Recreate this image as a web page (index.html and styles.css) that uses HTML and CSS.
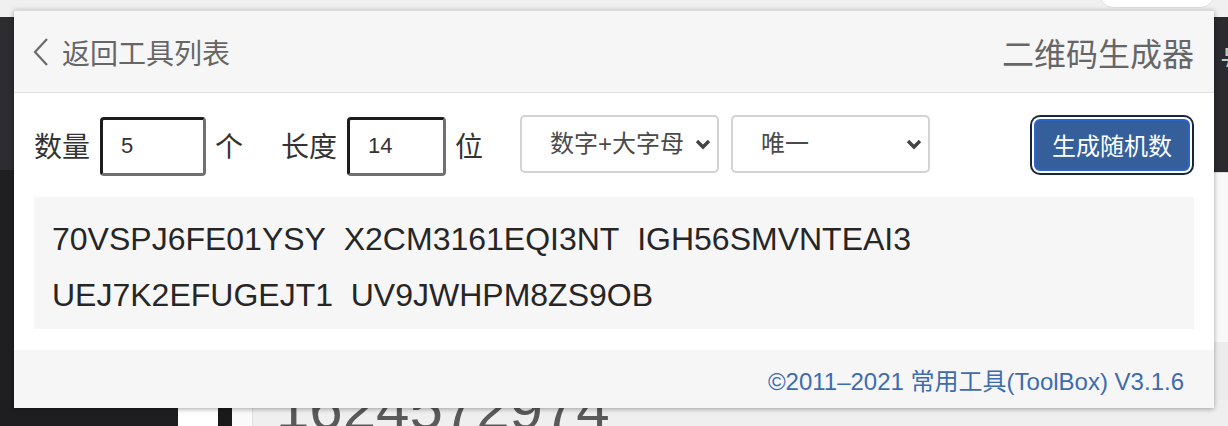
FILE: index.html
```html
<!DOCTYPE html>
<html lang="zh-CN">
<head>
  <meta charset="UTF-8">
  <meta name="viewport" content="width=device-width, initial-scale=1.0">
  <title>二维码生成器 - 生成随机数</title>
  <link rel="stylesheet" href="styles.css">
</head>
<body>
  <!-- page behind the popup -->
  <div class="bg-top"><div class="bg-pill"></div></div>
  <div class="bg-left"></div>
  <div class="bg-right-dark"><span class="bg-glyph">号</span></div>
  <div class="bg-right-light"></div>
  <div class="bg-right-gray"></div>
  <div class="bg-bottom">
    <div class="strip strip-dark"></div>
    <div class="strip strip-white"></div>
    <div class="strip strip-black"></div>
    <div class="strip strip-white2"></div>
    <div class="strip strip-gray"></div>
  </div>
  <div class="bg-number">1624572974</div>

  <!-- popup -->
  <div class="popup">
    <div class="header">
      <a class="back" href="#">
        <svg class="back-icon" width="16" height="30" viewBox="0 0 16 30"><polyline points="14,2 2,15 14,28" fill="none" stroke="#6b6b6b" stroke-width="2.2"/></svg>
        <span>返回工具列表</span>
      </a>
      <div class="title">二维码生成器</div>
    </div>

    <div class="main">
      <div class="controls">
        <span class="label">数量</span>
        <input type="text" class="num-input" value="5">
        <span class="label unit">个</span>
        <span class="label">长度</span>
        <input type="text" class="num-input" value="14">
        <span class="label">位</span>
        <div class="select-wrap first">
          <select class="select">
            <option>数字+大字母</option>
          </select>
          <svg class="chevron" width="16" height="11" viewBox="0 0 16 11"><polyline points="2,2 8,8 14,2" fill="none" stroke="#444" stroke-width="3.4"/></svg>
        </div>
        <div class="select-wrap">
          <select class="select">
            <option>唯一</option>
          </select>
          <svg class="chevron" width="16" height="11" viewBox="0 0 16 11"><polyline points="2,2 8,8 14,2" fill="none" stroke="#444" stroke-width="3.4"/></svg>
        </div>
        <button class="gen-button">生成随机数</button>
      </div>

      <div class="output" id="output">
        <div>70VSPJ6FE01YSY&nbsp;&nbsp;X2CM3161EQI3NT&nbsp;&nbsp;IGH56SMVNTEAI3</div>
        <div>UEJ7K2EFUGEJT1&nbsp;&nbsp;UV9JWHPM8ZS9OB</div>
      </div>
    </div>

    <div class="footer">©2011–2021 常用工具(ToolBox) V3.1.6</div>
  </div>
</body>
</html>
```

FILE: styles.css
```css
body {
  margin: 0;
  width: 1228px;
  height: 426px;
  overflow: hidden;
  position: relative;
  background: #1f1e21;
  font-family: "Liberation Sans", "Noto Sans CJK SC", sans-serif;
}

/* background page */
.bg-top {
  position: absolute;
  left: 0;
  top: 0;
  width: 1228px;
  height: 17px;
  background: #f1f0f1;
  overflow: hidden;
}
.bg-pill {
  position: absolute;
  left: 1098px;
  top: -24px;
  width: 116px;
  height: 30px;
  border-radius: 16px;
  background: #fff;
  border: 1px solid #e0e0e0;
}
.bg-left {
  position: absolute;
  left: 0;
  top: 17px;
  width: 14px;
  height: 153px;
  background: #2d2c30;
}
.bg-right-dark {
  position: absolute;
  left: 1214px;
  top: 17px;
  width: 14px;
  height: 155px;
  background: #2b2a2e;
  overflow: hidden;
}
.bg-glyph {
  position: absolute;
  left: 6px;
  top: 20px;
  font-size: 30px;
  color: #c8c8c8;
  font-family: "Noto Sans CJK SC", sans-serif;
}
.bg-right-light {
  position: absolute;
  left: 1214px;
  top: 172px;
  width: 14px;
  height: 170px;
  background: #f8f8f8;
  box-shadow: inset 0 71px 0 -70px #dcdcdc;
}
.bg-right-gray {
  position: absolute;
  left: 1214px;
  top: 342px;
  width: 14px;
  height: 84px;
  background: #ececec;
}
.bg-bottom {
  position: absolute;
  left: 0;
  top: 400px;
  width: 1228px;
  height: 26px;
  display: flex;
}
.strip-dark { width: 178px; background: #1e1d20; }
.strip-white { width: 40px; background: #fff; }
.strip-black { width: 14px; background: #1a1a1a; }
.strip-white2 { width: 20px; background: #fafafa; }
.strip-gray { flex: 1; background: #efefef; border-left: 1px solid #dedede; }
.bg-number {
  position: absolute;
  left: 276px;
  top: 379px;
  font-size: 60px;
  line-height: 60px;
  color: #5a5a5a;
}

/* popup */
.popup {
  position: absolute;
  left: 14px;
  top: 10px;
  width: 1200px;
  height: 398px;
  background: #fff;
  box-shadow: 0 1px 5px rgba(0, 0, 0, 0.35);
  display: flex;
  flex-direction: column;
}
.header {
  box-sizing: border-box;
  height: 83px;
  background: #f7f6f7;
  border-top: 1px solid #dcdcdc;
  border-bottom: 1px solid #e0e0e0;
  display: flex;
  align-items: center;
  justify-content: space-between;
  padding: 0 20px 0 19px;
}
.back {
  display: flex;
  align-items: center;
  gap: 13px;
  color: #666;
  font-size: 28px;
  text-decoration: none;
}
.title {
  font-size: 32px;
  color: #666;
}

.main {
  padding: 21px 20px 0;
}
.controls {
  display: flex;
  align-items: center;
  height: 61px;
}
.label {
  font-size: 28px;
  color: #333;
  margin-right: 10px;
}
.unit {
  margin-right: 38px;
}
.num-input {
  box-sizing: border-box;
  width: 106px;
  height: 59px;
  margin-top: 3px;
  margin-right: 9px;
  border: 3px solid;
  border-color: #1c1c1c #707070 #707070 #1c1c1c;
  border-radius: 4px;
  padding: 0 0 0 18px;
  font-family: "Liberation Sans", sans-serif;
  font-size: 22px;
  color: #333;
  outline: none;
}
.controls .num-input:nth-of-type(2) {
  width: 99px;
}
.select-wrap {
  position: relative;
  margin-top: -2px;
}
.select-wrap.first {
  margin-left: 27px;
  margin-right: 12px;
}
.select {
  box-sizing: border-box;
  width: 199px;
  height: 58px;
  appearance: none;
  -webkit-appearance: none;
  border: 2px solid #d2d2d2;
  border-radius: 5px;
  background: #fff;
  padding: 0 34px 0 28px;
  font-family: "Liberation Sans", "Noto Sans CJK SC", sans-serif;
  font-size: 24px;
  color: #4a4a4a;
  white-space: nowrap;
  overflow: hidden;
}
.chevron {
  position: absolute;
  right: 8px;
  top: 24px;
}
.gen-button {
  margin-left: auto;
  margin-right: 4px;
  box-sizing: border-box;
  width: 156px;
  height: 52px;
  border: 2px solid #2c64c9;
  border-radius: 6px;
  background: #355f9b;
  color: #fff;
  font-family: "Noto Sans CJK SC", sans-serif;
  font-size: 24px;
  box-shadow: 0 0 0 2px #fff, 0 0 0 4px #17253a;
  cursor: pointer;
}

.output {
  margin-top: 22px;
  box-sizing: border-box;
  height: 132px;
  background: #f7f6f7;
  padding: 14px 18px 6px;
  font-size: 32px;
  line-height: 56px;
  color: #262626;
}

.footer {
  margin-top: auto;
  height: 58px;
  background: #f7f6f7;
  display: flex;
  align-items: center;
  justify-content: flex-end;
  padding-right: 30px;
  font-size: 24px;
  color: #3d6cae;
}
```
